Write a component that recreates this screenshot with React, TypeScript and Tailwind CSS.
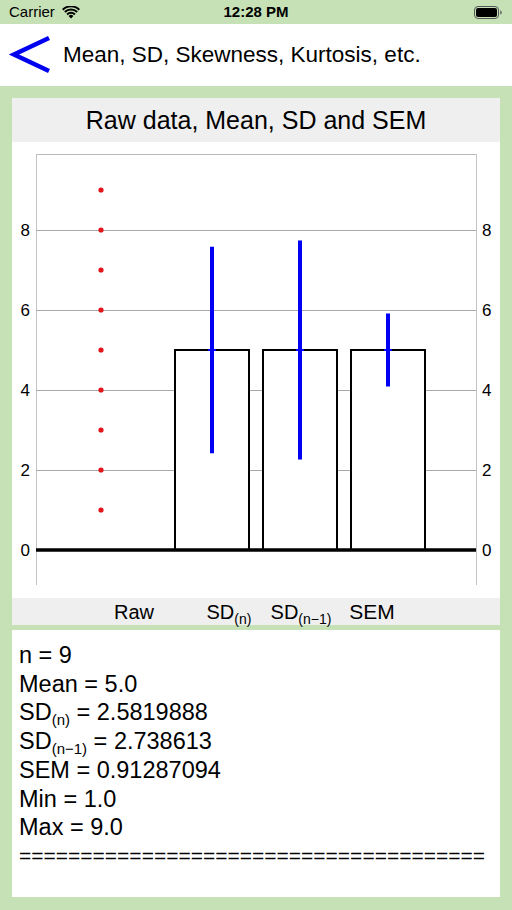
import React from 'react';

const FONT = { fontFamily: '"Liberation Sans", Arial, sans-serif' };

function Sub({ children, className = 'text-[14px]' }: { children: React.ReactNode; className?: string }) {
  return <span className={`${className} relative top-[5px] leading-[0]`}>{children}</span>;
}

function WifiIcon() {
  return (
    <svg width="18" height="13" viewBox="0 0 18 13">
      <path d="M9 12.5 L6.6 9.9 A3.4 3.4 0 0 1 11.4 9.9 Z" fill="#000" />
      <path d="M4.4 7.7 A6.5 6.5 0 0 1 13.6 7.7 L12.2 9.2 A4.5 4.5 0 0 0 5.8 9.2 Z" fill="#000" />
      <path d="M2.1 5.3 A9.8 9.8 0 0 1 15.9 5.3 L14.5 6.8 A7.8 7.8 0 0 0 3.5 6.8 Z" fill="#000" />
      <path d="M0 3 A12.8 12.8 0 0 1 18 3 L16.6 4.5 A10.8 10.8 0 0 0 1.4 4.5 Z" fill="#000" />
    </svg>
  );
}

function Battery() {
  return (
    <svg width="28" height="13" viewBox="0 0 28 13">
      <rect x="0.5" y="0.5" width="24" height="12" rx="3.5" fill="none" stroke="#555" strokeWidth="1" />
      <rect x="2" y="2" width="21" height="9" rx="2" fill="#000" />
      <path d="M26 4.5 A2 2 0 0 1 26 8.5 Z" fill="#777" />
    </svg>
  );
}

function Chart() {
  const y = (v: number) => 408 - 40 * v;
  const bars = [
    { x: 163, c: 200, e: 2.5819888 },
    { x: 251, c: 288, e: 2.738613 },
    { x: 339, c: 376, e: 0.91287094 },
  ];
  return (
    <svg width="488" height="456" viewBox="0 0 488 456" style={FONT} className="block">
      <rect x="0" y="0" width="488" height="456" fill="#fff" />
      <line x1="24" y1="12.5" x2="464" y2="12.5" stroke="#b8b8b8" strokeWidth="1" />
      <line x1="24.5" y1="12" x2="24.5" y2="443" stroke="#c4c4c4" strokeWidth="1" />
      <line x1="464.5" y1="12" x2="464.5" y2="443" stroke="#c4c4c4" strokeWidth="1" />
      {[2, 4, 6, 8].map((v) => (
        <line key={v} x1="24" y1={y(v) + 0.5} x2="464" y2={y(v) + 0.5} stroke="#a8a8a8" strokeWidth="1" />
      ))}
      {[0, 2, 4, 6, 8].map((v) => (
        <g key={v}>
          <text x="18" y={y(v) + 6} textAnchor="end" fontSize="17" fill="#000">{v}</text>
          <text x="470" y={y(v) + 6} fontSize="17" fill="#000">{v}</text>
        </g>
      ))}
      {[1, 2, 3, 4, 5, 6, 7, 8, 9].map((v) => (
        <circle key={v} cx="89" cy={y(v)} r="2.6" fill="#e5141a" />
      ))}
      {bars.map((b) => (
        <g key={b.x}>
          <rect x={b.x} y={y(5)} width="74" height="200" fill="#fff" stroke="#000" strokeWidth="2" />
          <line x1={b.c} y1={y(5 + b.e)} x2={b.c} y2={y(5 - b.e)} stroke="#0000f5" strokeWidth="4" />
          <line x1={b.c - 4} y1={y(5)} x2={b.c + 4} y2={y(5)} stroke="#0000f5" strokeWidth="2" />
        </g>
      ))}
      <line x1="24" y1="408" x2="464" y2="408" stroke="#000" strokeWidth="3.5" />
    </svg>
  );
}

export default function App() {
  return (
    <div className="w-[512px] h-[910px] bg-[#c6e1b6] flex flex-col text-black" style={FONT}>
      {/* status bar */}
      <div className="h-[24px] flex items-center justify-between pl-[9px] pr-[10px] relative">
        <div className="flex items-center gap-[7px] text-[15px]">
          <span>Carrier</span>
          <WifiIcon />
        </div>
        <span className="absolute left-1/2 -translate-x-1/2 text-[15px] font-semibold">12:28 PM</span>
        <Battery />
      </div>

      {/* nav header */}
      <div className="h-[62px] bg-white flex items-center">
        <svg width="64" height="62" viewBox="0 0 64 62" className="shrink-0">
          <polyline points="49,14 14,30.5 49,47" fill="none" stroke="#0000f0" strokeWidth="4.5" />
        </svg>
        <span className="text-[22.5px] -ml-[1px]">Mean, SD, Skewness, Kurtosis, etc.</span>
      </div>

      {/* chart panel */}
      <div className="px-3 pt-3">
        <div className="h-[44px] bg-[#efefef] flex items-center justify-center text-[25px] pt-[1px]">
          Raw data, Mean, SD and SEM
        </div>
        <Chart />
        <div className="h-[27px] bg-[#efefef] flex items-center text-[20px] leading-none">
          <span className="w-[60px] ml-[92px] text-center">Raw</span>
          <span className="w-[60px] ml-[35px] text-center whitespace-nowrap">
            SD<Sub className="text-[14px]">(n)</Sub>
          </span>
          <span className="w-[72px] ml-[6px] text-center whitespace-nowrap">
            SD<Sub className="text-[14px]">(n−1)</Sub>
          </span>
          <span className="w-[60px] ml-[5px] text-center text-[21px]">SEM</span>
        </div>
      </div>

      {/* results */}
      <div className="mx-3 mt-[5px] h-[267px] bg-white pl-[7px] pt-[11px] text-[23.5px] leading-[28.7px]">
        <div>n = 9</div>
        <div>Mean = 5.0</div>
        <div>
          SD<Sub className="text-[15px]">(n)</Sub> = 2.5819888
        </div>
        <div>
          SD<Sub className="text-[15px]">(n−1)</Sub> = 2.738613
        </div>
        <div>SEM = 0.91287094</div>
        <div>Min = 1.0</div>
        <div>Max = 9.0</div>
        <div className="text-[21px] whitespace-nowrap">======================================</div>
      </div>
    </div>
  );
}
